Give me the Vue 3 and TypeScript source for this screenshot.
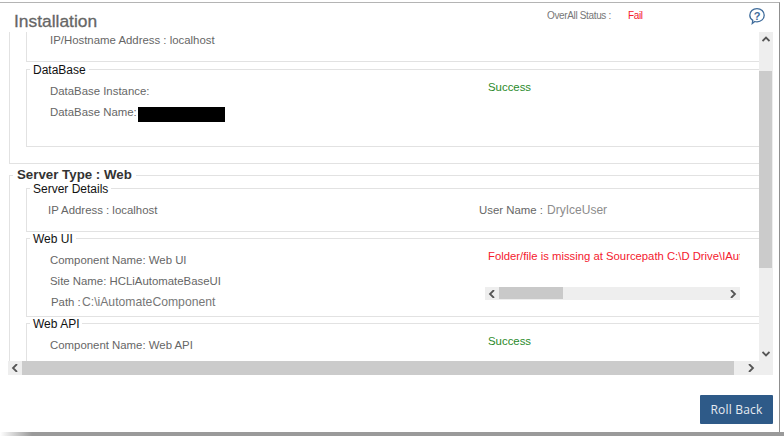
<script setup lang="ts">
const left = '2,0 -2,4 2,8'
</script>

<template>
  <div class="page">
    <div class="dialog">
      <header class="head">
        <h1 class="title">Installation</h1>
        <div class="status">
          <span class="status-label">OverAll Status :</span>
          <span class="status-value">Fail</span>
        </div>
        <svg class="help" width="18" height="18" viewBox="0 0 18 18" aria-label="Help">
          <path d="M9 1.6c4.1 0 7.2 2.9 7.2 6.6S13.100 14.800 9 14.800c-.8 0-1.500-.1-2.200-.3L4.300 16.400l.5-3C3 12.200 1.800 10.400 1.800 8.200 1.800 4.500 4.900 1.600 9 1.600z" fill="none" stroke="#3f6c9b" stroke-width="1.300" />
          <text x="9" y="12.500" text-anchor="middle" class="help-mark">?</text>
        </svg>
      </header>

      <div class="frame">
        <div class="viewport">
          <div class="content">
            <section class="group-cut">
              <div class="frag">
                <div class="text first">IP/Hostname Address : localhost</div>
              </div>
              <fieldset class="box">
                <legend>DataBase</legend>
                <div class="rows db">
                  <div class="text">DataBase Instance:</div>
                  <div class="ok">Success</div>
                  <div class="text">DataBase Name:<span class="redact"></span></div>
                </div>
              </fieldset>
            </section>

            <fieldset class="group">
              <legend>Server Type : Web</legend>
              <fieldset class="box lead">
                <legend>Server Details</legend>
                <div class="rows details">
                  <div class="text ip">IP Address : localhost</div>
                  <div class="user">User Name : <span class="muted">DryIceUser</span></div>
                </div>
              </fieldset>
              <fieldset class="box next">
                <legend>Web UI</legend>
                <div class="rows ui">
                  <div class="text">Component Name: Web UI</div>
                  <div class="scroller">
                    <div class="clip">Folder/file is missing at Sourcepath C:\D Drive\IAutomateComponent\WebUI</div>
                    <div class="mini-bar">
                      <span class="arrow-h">
                        <svg width="8" height="8" viewBox="-4 0 8 8"><polyline :points="left" class="chev" /></svg>
                      </span>
                      <span class="mini-thumb"></span>
                      <span class="arrow-h end">
                        <svg width="8" height="8" viewBox="-4 0 8 8"><polyline points="-2,0 2,4 -2,8" class="chev" /></svg>
                      </span>
                    </div>
                  </div>
                  <div class="text">Site Name: HCLiAutomateBaseUI</div>
                  <div class="text path">Path : <span class="path-value">C:\iAutomateComponent</span></div>
                </div>
              </fieldset>
              <fieldset class="box next">
                <legend>Web API</legend>
                <div class="rows api">
                  <div class="text">Component Name: Web API</div>
                  <div class="ok">Success</div>
                </div>
              </fieldset>
            </fieldset>
          </div>
        </div>

        <div class="vbar">
          <span class="arrow-v">
            <svg width="8" height="6" viewBox="0 0 8 6"><polyline points="0.500,5 4,1.500 7.500,5" class="chev" /></svg>
          </span>
          <span class="vthumb"></span>
          <span class="arrow-v bottom">
            <svg width="8" height="6" viewBox="0 0 8 6"><polyline points="0.500,1 4,4.500 7.500,1" class="chev" /></svg>
          </span>
        </div>

        <div class="hbar">
          <span class="arrow-h">
            <svg width="8" height="8" viewBox="-4 0 8 8"><polyline :points="left" class="chev" /></svg>
          </span>
          <span class="hthumb"></span>
          <span class="arrow-h end">
            <svg width="8" height="8" viewBox="-4 0 8 8"><polyline points="-2,0 2,4 -2,8" class="chev" /></svg>
          </span>
        </div>
      </div>

      <footer class="foot">
        <button class="rollback" type="button">Roll Back</button>
      </footer>
    </div>
    <div class="shadow"></div>
  </div>
</template>

<style>
html, body { margin: 0; background: #fff; }
</style>

<style scoped>
.page {
  width: 784px;
  height: 436px;
  display: flex;
  flex-direction: column;
  overflow: hidden;
  background: #fff;
  padding-top: 2px;
  box-sizing: border-box;
  font-family: "Liberation Sans", Arial, sans-serif;
}
.dialog {
  width: 780px;
  flex: 1;
  min-height: 0;
  box-sizing: border-box;
  border-top: 1px solid #b4b4b4;
  border-right: 1px solid #8f8f8f;
  display: flex;
  flex-direction: column;
}
.shadow {
  height: 4px;
  flex: none;
  background: linear-gradient(90deg, #fff 0, #9a9a9a 32px);
}
.head {
  height: 29px;
  flex: none;
  display: flex;
  align-items: center;
}
.title {
  margin: 7px 0 0 14px;
  font-size: 17.4px;
  font-weight: 400;
  color: #666;
  -webkit-text-stroke: 0.3px #666;
  width: 533px;
}
.status {
  display: flex;
  font-size: 10px;
  letter-spacing: -0.35px;
  margin-top: -4px;
  width: 201px;
}
.status-label { color: #777; width: 81px; }
.status-value { color: #f4202e; }
.help { margin-top: -3px; }
.help-mark {
  font: 700 11px "Liberation Sans", Arial, sans-serif;
  fill: #3f6c9b;
}
.frame {
  margin-left: 8px;
  width: 765px;
  flex: none;
  display: grid;
  grid-template-columns: 751px 14px;
  grid-template-rows: 329px 14px;
}
.viewport { overflow: hidden; }
.content {
  width: 1000px;
  margin-left: 1px;
}
.text, .ok, .user, .clip {
  font-size: 11.4px;
  color: #666;
  white-space: nowrap;
}
.group-cut {
  border-left: 1px solid #e2e2e2;
  border-bottom: 1px solid #e2e2e2;
  padding-bottom: 16px;
  padding-left: 16px;
}
.frag {
  height: 29px;
  border-left: 1px solid #e2e2e2;
  border-bottom: 1px solid #e2e2e2;
}
.first { padding: 1px 0 0 23px; line-height: 15px; }
fieldset {
  margin: 0;
  min-width: 0;
  border: 1px solid #e2e2e2;
}
.group {
  margin-top: 3px;
  padding: 0;
}
.group > legend {
  margin-left: 3px;
  padding: 0 4px;
  font-size: 13.3px;
  font-weight: 700;
  line-height: 16px;
  color: #333;
}
.box { padding: 0; }
.group > .box { margin-left: 16px; }
.group > .lead { margin-top: -2px; }
.group > .next { margin-top: -1px; }
.box > legend {
  margin-left: 3px;
  padding: 2px 3px 0;
  font-size: 12px;
  line-height: 13px;
  color: #111;
}
.rows {
  display: grid;
  grid-template-columns: 458px 1fr;
  grid-auto-rows: 21px;
  padding-top: 4px;
  box-sizing: border-box;
}
.rows > .text { padding-left: 23px; line-height: 21px; }
.db { height: 69px; }
.details { height: 35px; }
.ui { height: 70px; }
.api { height: 40px; }
.rows > .ip { padding-left: 21px; }
.rows > .path { padding-left: 24px; }
.path-value { font-size: 12.2px; color: #777; margin-left: -2px; }
.ok {
  color: #2a8a2a;
  padding-left: 3px;
  line-height: 13px;
  align-self: start;
}
.user { margin-left: -6px; line-height: 21px; }
.muted { color: #8c8c8c; margin-left: 1px; font-size: 12px; }
.redact {
  display: inline-block;
  width: 87px;
  height: 15px;
  margin-left: 1px;
  background: #000;
  vertical-align: -6px;
}
.ui .scroller {
  grid-column: 2;
  grid-row: 1 / span 3;
  width: 255px;
}
.clip {
  color: #f4202e;
  font-size: 11.3px;
  overflow: hidden;
  padding-left: 3px;
  line-height: 13px;
}
.mini-bar {
  margin-top: 24px;
  height: 13px;
  background: #eee;
  display: flex;
}
.mini-thumb {
  width: 64px;
  height: 12px;
  background: #c9c9c9;
}
.arrow-h {
  width: 14px;
  flex: none;
  display: flex;
  align-items: center;
  justify-content: center;
}
.end { margin-left: auto; }
.chev {
  fill: none;
  stroke: #555;
  stroke-width: 1.800;
}
.vbar {
  background: #eee;
  display: flex;
  flex-direction: column;
  align-items: flex-start;
}
.arrow-v {
  width: 14px;
  height: 14px;
  flex: none;
  display: flex;
  align-items: center;
  justify-content: center;
}
.vthumb {
  width: 13px;
  height: 197px;
  margin-top: 25px;
  background: #cbcbcb;
}
.bottom { margin-top: auto; }
.hbar {
  grid-column: 1 / span 2;
  background: #eee;
  display: flex;
  padding-right: 15px;
}
.hthumb {
  width: 712px;
  background: #cbcbcb;
}
.foot {
  flex: 1;
  display: flex;
  justify-content: flex-end;
  align-items: flex-start;
  padding: 20px 6px 0 0;
}
.rollback {
  width: 73px;
  height: 29px;
  border: 0;
  border-radius: 1px;
  background: #2e5a88;
  color: #e6ebf1;
  font: 400 12px "Open Sans", sans-serif;
  letter-spacing: 0.2px;
  padding: 0;
}
</style>
